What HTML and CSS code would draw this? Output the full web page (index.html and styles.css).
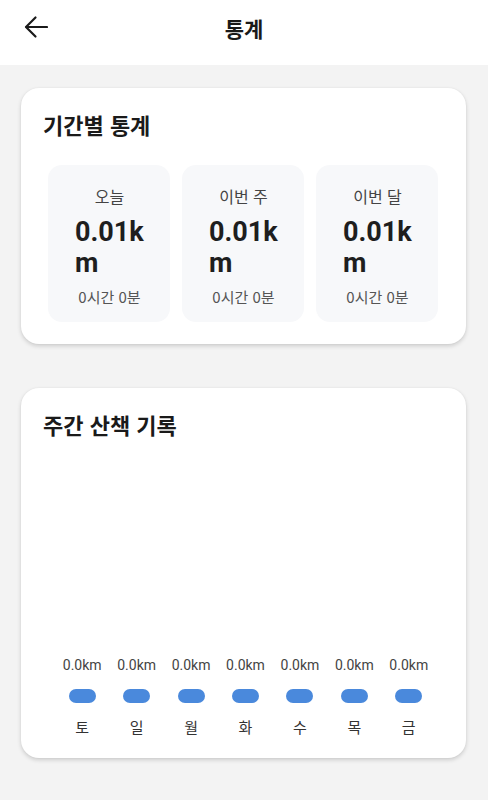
FILE: index.html
```html
<!DOCTYPE html>
<html lang="ko">
<head>
<meta charset="utf-8">
<title>통계</title>
<link rel="stylesheet" href="styles.css">
</head>
<body>
<header class="topbar">
  <button class="back" aria-label="뒤로">
    <svg width="24" height="24" viewBox="0 0 24 24" fill="none" stroke="#1a1a1a" stroke-width="2.2" stroke-linecap="round" stroke-linejoin="round">
      <path d="M23 12H2.5"/>
      <path d="M11.5 2.5L2 12l9.5 9.5"/>
    </svg>
  </button>
  <h1 class="title">통계</h1>
</header>
<main class="content">
  <section class="card">
    <h2 class="card-title">기간별 통계</h2>
    <div class="stats">
      <div class="stat">
        <div class="stat-label">오늘</div>
        <div class="stat-value">0.01km</div>
        <div class="stat-time">0시간 0분</div>
      </div>
      <div class="stat">
        <div class="stat-label">이번 주</div>
        <div class="stat-value">0.01km</div>
        <div class="stat-time">0시간 0분</div>
      </div>
      <div class="stat">
        <div class="stat-label">이번 달</div>
        <div class="stat-value">0.01km</div>
        <div class="stat-time">0시간 0분</div>
      </div>
    </div>
  </section>
  <section class="card card-week">
    <h2 class="card-title">주간 산책 기록</h2>
    <div class="chart">
      <div class="col"><span class="km">0.0km</span><span class="bar"></span><span class="day">토</span></div>
      <div class="col"><span class="km">0.0km</span><span class="bar"></span><span class="day">일</span></div>
      <div class="col"><span class="km">0.0km</span><span class="bar"></span><span class="day">월</span></div>
      <div class="col"><span class="km">0.0km</span><span class="bar"></span><span class="day">화</span></div>
      <div class="col"><span class="km">0.0km</span><span class="bar"></span><span class="day">수</span></div>
      <div class="col"><span class="km">0.0km</span><span class="bar"></span><span class="day">목</span></div>
      <div class="col"><span class="km">0.0km</span><span class="bar"></span><span class="day">금</span></div>
    </div>
  </section>
</main>
</body>
</html>
```
FILE: styles.css
```css
* { box-sizing: border-box; }
html, body { margin: 0; padding: 0; }
body {
  background: #f3f3f3;
  font-family: Roboto, "Noto Sans CJK KR", sans-serif;
  color: #1a1a1a;
  width: 488px;
  height: 800px;
  overflow: hidden;
}
.topbar {
  height: 65px;
  background: #ffffff;
  display: flex;
  align-items: center;
  justify-content: center;
  position: relative;
}
.back {
  position: absolute;
  left: 24px;
  top: 15px;
  width: 24px;
  height: 24px;
  padding: 0;
  border: 0;
  background: none;
  display: flex;
}
.title {
  margin: 0;
  font-size: 21px;
  font-weight: 700;
  line-height: 28px;
  margin-top: -9px;
  font-family: "Noto Sans CJK KR", sans-serif;
}
.content {
  padding: 23px 22px 0 21px;
  display: flex;
  flex-direction: column;
  gap: 44px;
}
.card {
  background: #ffffff;
  border-radius: 18px;
  box-shadow: 0 2px 4px rgba(0,0,0,0.16), 0 0 2px rgba(0,0,0,0.05);
  padding: 22px 22px 22px 22px;
}
.card-title {
  margin: 0;
  font-family: "Noto Sans CJK KR", sans-serif;
  font-size: 22px;
  font-weight: 700;
  line-height: 28px;
  color: #1a1a1a;
}
.stats {
  margin: 27px 6px 0 5px;
  display: grid;
  grid-template-columns: repeat(3, 1fr);
  gap: 12px;
}
.stat {
  background: #f7f8fa;
  border-radius: 14px;
  height: 157px;
  padding: 20px 25px 0 26px;
  display: flex;
  flex-direction: column;
}
.stat-label {
  text-align: center;
  font-family: "Noto Sans CJK KR", sans-serif;
  font-size: 16px;
  line-height: 22px;
  color: #444;
}
.stat-value {
  margin-top: 10px;
  font-size: 27px;
  font-weight: 700;
  line-height: 31px;
  color: #1e1e1e;
  word-break: break-all;
  text-align: left;
  padding-left: 1px;
}
.stat-time {
  margin-top: 8px;
  text-align: center;
  font-family: "Noto Sans CJK KR", sans-serif;
  font-size: 15px;
  line-height: 20px;
  color: #555;
  white-space: nowrap;
}
.chart {
  height: 298px;
  margin: 0 8px 0 12px;
  display: grid;
  grid-template-columns: repeat(7, 1fr);
  align-items: end;
}
.col {
  display: flex;
  flex-direction: column;
  align-items: center;
}
.km {
  font-size: 14px;
  line-height: 16px;
  color: #444;
}
.bar {
  margin-top: 16px;
  width: 27px;
  height: 14px;
  border-radius: 7px;
  background: #4a89dc;
}
.day {
  margin-top: 14px;
  font-family: "Noto Sans CJK KR", sans-serif;
  font-size: 15px;
  line-height: 19px;
  color: #333;
}
```
